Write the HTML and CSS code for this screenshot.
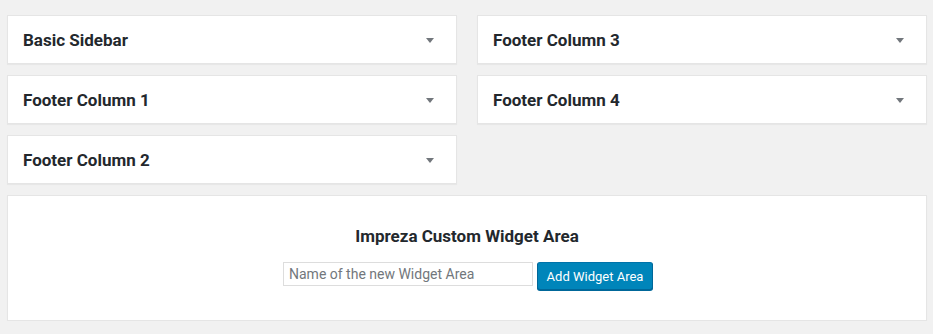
FILE: index.html
```html
<!DOCTYPE html>
<html>
<head>
	<title>Widgets</title>
	<meta charset="utf-8">
	<link rel="stylesheet" href="styles.css">
</head>
<body>
	<div class="areas">
		<div class="column">
			<div class="area">
				<h2>Basic Sidebar</h2>
				<span class="toggle"></span>
			</div>
			<div class="area">
				<h2>Footer Column 1</h2>
				<span class="toggle"></span>
			</div>
			<div class="area">
				<h2>Footer Column 2</h2>
				<span class="toggle"></span>
			</div>
		</div>
		<div class="column">
			<div class="area">
				<h2>Footer Column 3</h2>
				<span class="toggle"></span>
			</div>
			<div class="area">
				<h2>Footer Column 4</h2>
				<span class="toggle"></span>
			</div>
		</div>
	</div>

	<div class="custom">
		<h3>Impreza Custom Widget Area</h3>
		<form class="add-form">
			<input type="text" class="name" placeholder="Name of the new Widget Area">
			<button type="button" class="add">Add Widget Area</button>
		</form>
	</div>
</body>
</html>
```

FILE: styles.css
```css
*{
	box-sizing: border-box;
}
body{
	margin: 0;
	padding: 15px 6px 0 7px;
	background: #f1f1f1;
	font-family: Roboto, 'Liberation Sans', sans-serif;
	color: #23282d;
}
.areas{
	display: flex;
	gap: 20px;
}
.column{
	width: 450px;
	display: flex;
	flex-direction: column;
	gap: 11px;
}
.area{
	display: flex;
	align-items: center;
	justify-content: space-between;
	padding: 15px 22px 14px 15px;
	background: #fff;
	border: 1px solid #e5e5e5;
	box-shadow: 0 1px 1px rgba(0,0,0,.04);
}
.area h2{
	margin: 0;
	font-size: 17px;
	line-height: 18px;
	font-weight: 700;
}
.toggle{
	width: 0;
	height: 0;
	border-left: 4px solid transparent;
	border-right: 4px solid transparent;
	border-top: 5px solid #72777c;
	margin-top: 1px;
}
.custom{
	width: 920px;
	margin-top: 11px;
	padding: 31px 0 30px;
	background: #fff;
	border: 1px solid #e5e5e5;
	box-shadow: 0 1px 1px rgba(0,0,0,.04);
	text-align: center;
}
.custom h3{
	margin: 0 0 17px;
	font-size: 17px;
	line-height: 18px;
	font-weight: 700;
}
.add-form{
	display: flex;
	justify-content: center;
	align-items: flex-start;
	gap: 4px;
	margin: 0;
	padding-left: 2px;
}
.name{
	width: 250px;
	height: 24px;
	margin: 0;
	padding: 0 5px;
	border: 1px solid #ddd;
	font-family: Roboto, 'Liberation Sans', sans-serif;
	font-size: 14px;
	color: #32373c;
	outline: none;
}
.name::placeholder{
	color: #72777c;
}
.add{
	width: 116px;
	height: 28px;
	margin: 0;
	padding: 0;
	border: 1px solid #0073aa;
	border-color: #0073aa #006799 #006799;
	border-radius: 3px;
	background: #0085ba;
	box-shadow: 0 1px 0 #006799;
	color: #fff;
	font-family: Roboto, 'Liberation Sans', sans-serif;
	font-size: 13px;
	cursor: pointer;
}
```
